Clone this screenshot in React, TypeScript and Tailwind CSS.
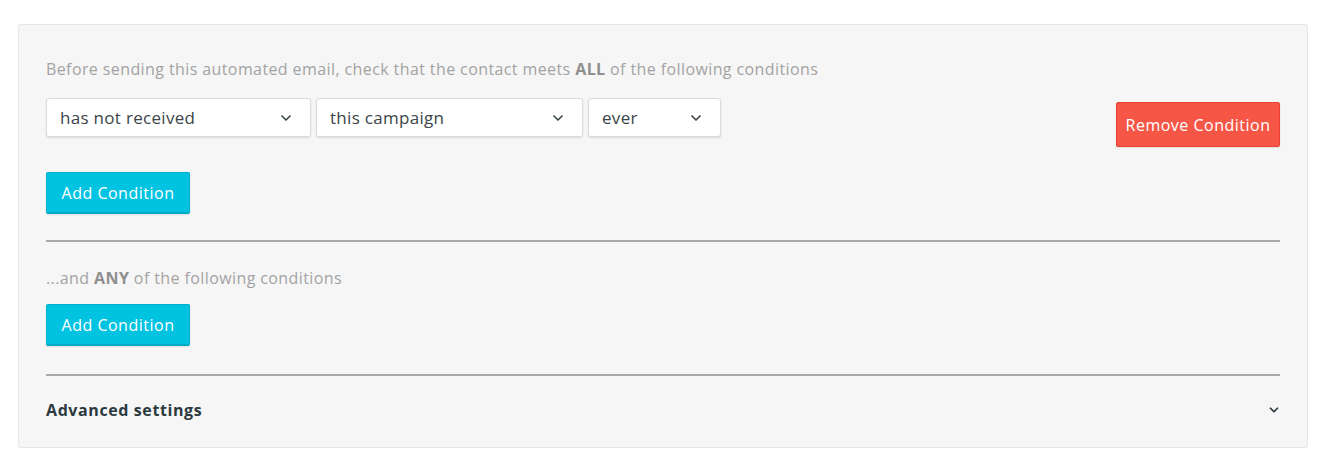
import { ChevronDown } from "lucide-react";

function Select({ label, width }: { label: string; width: string }) {
  return (
    <div
      className={`${width} h-[39px] flex items-center justify-between bg-white border border-[#dcdcdc] rounded-[3px] shadow-[0_1px_2px_rgba(0,0,0,0.12)] pl-[13px] pr-[16px] text-[17px] tracking-[0.3px] text-[#3b4549]`}
    >
      <span>{label}</span>
      <ChevronDown size={16} strokeWidth={2.5} className="text-[#3b4549]" />
    </div>
  );
}

function AddButton() {
  return (
    <button className="h-[42px] w-[144px] bg-[#00c2e1] border border-[#00b0cc] border-b-2 border-b-[#00a9c4] rounded-[2px] text-white text-[16px] tracking-[0.5px] shadow-[0_1px_2px_rgba(0,0,0,0.1)]">
      Add Condition
    </button>
  );
}

export default function App() {
  return (
    <div className="min-h-screen bg-white pt-[24px] pl-[18px] pr-[24px] font-['Open_Sans',sans-serif]">
      <div className="bg-[#f6f6f6] border border-[#e6e6e6] rounded-[3px] px-[27px] pt-[33px] pb-[25px]">
        <p className="text-[16px] tracking-[0.4px] text-[#a3a3a3] leading-[22px]">
          Before sending this automated email, check that the contact meets{" "}
          <b className="font-bold text-[#8f8f8f]">ALL</b> of the following conditions
        </p>

        <div className="flex items-start justify-between mt-[18px]">
          <div className="flex gap-[5px]">
            <Select label="has not received" width="w-[265px]" />
            <Select label="this campaign" width="w-[267px]" />
            <Select label="ever" width="w-[133px]" />
          </div>
          <button className="mt-[4px] h-[45px] w-[164px] bg-[#f65646] border border-[#e9402f] rounded-[2px] text-white text-[16px] tracking-[0.5px] shadow-[0_1px_2px_rgba(0,0,0,0.1)]">
            Remove Condition
          </button>
        </div>

        <div className="mt-[25px]">
          <AddButton />
        </div>

        <div className="mt-[26px] h-[2px] bg-[#a9a9a9]" />

        <p className="mt-[25px] text-[16px] tracking-[0.4px] text-[#a3a3a3] leading-[22px]">
          ...and <b className="font-bold text-[#8f8f8f]">ANY</b> of the following conditions
        </p>

        <div className="mt-[15px]">
          <AddButton />
        </div>

        <div className="mt-[28px] h-[2px] bg-[#a9a9a9]" />

        <div className="flex items-center justify-between mt-[22px]">
          <span className="text-[16px] tracking-[0.6px] font-bold text-[#2c3a3f]">Advanced settings</span>
          <ChevronDown size={14} strokeWidth={3} className="text-[#2c3a3f] mr-[-1px]" />
        </div>
      </div>
    </div>
  );
}
